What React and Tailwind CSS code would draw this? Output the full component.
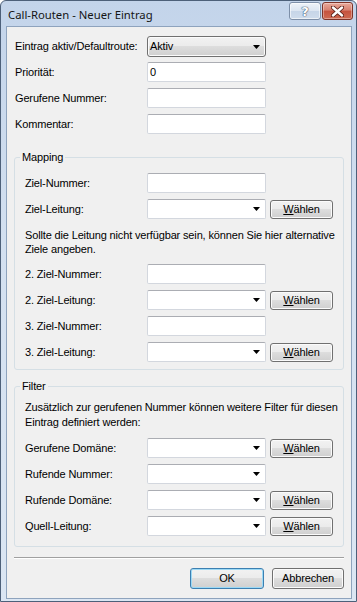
const btnBg =
  'bg-[linear-gradient(to_bottom,#f2f2f2_0%,#ebebeb_50%,#dddddd_50%,#cfcfcf_100%)]';

const Arrow = () => (
  <svg width="7" height="4" viewBox="0 0 7 4" className="shrink-0">
    <polygon points="0,0 7,0 3.5,4" fill="#000" />
  </svg>
);

const TextBox = ({ value }) => (
  <div className="h-[20px] w-[119px] shrink-0 bg-white border border-[#d3d7de] border-t-[#abadb3] rounded-[2px] pl-[2px] flex items-center">
    {value}
  </div>
);

const Combo = () => (
  <div className="h-[20px] w-[119px] shrink-0 bg-white border border-[#d3d7de] border-t-[#abadb3] rounded-[2px] pr-[5px] flex items-center justify-end">
    <Arrow />
  </div>
);

const ChooseButton = () => (
  <div
    className={`ml-[4px] h-[19px] w-[63px] shrink-0 border border-[#707070] rounded-[3px] shadow-[inset_0_0_0_1px_#fbfbfb] ${btnBg} flex items-center justify-center`}
  >
    <span>
      <span className="underline underline-offset-[1px]">W</span>ählen
    </span>
  </div>
);

const Row = ({ label, labelWidth, children }) => (
  <div className="flex items-center h-[20px]">
    <span className={`${labelWidth} shrink-0 whitespace-nowrap`}>{label}</span>
    {children}
  </div>
);

const Group = ({ title, className, children }) => (
  <fieldset
    className={`ml-[7px] w-[330px] border border-[#d5dfe5] rounded-[3px] pl-[10px] ${className}`}
  >
    <legend className="ml-[-5px] px-[2px] leading-[13px]">{title}</legend>
    {children}
  </fieldset>
);

export default function App() {
  const gl = 'w-[122px]';
  return (
    <div className="w-[357px] h-[602px] overflow-hidden font-['Liberation_Sans',Arial,sans-serif] text-[11px] tracking-[-0.15px] text-black">
      <div className="w-full h-full flex flex-col rounded-t-[6px] border border-[#4d6079] bg-[linear-gradient(to_bottom,#c3d4ea_0%,#d3e0f0_40%,#dbe6f3_100%)]">
        {/* title bar */}
        <div className="h-[25px] shrink-0 flex items-start pl-[7px]">
          <span className="pt-[6px] text-[11.3px] leading-[15px] tracking-normal text-[#151515] font-['Noto_Sans',sans-serif]">
            Call-Routen - Neuer Eintrag
          </span>
          <div className="ml-auto mt-[1px] mr-[3px] flex gap-[1px]">
            <div className="w-[32px] h-[18px] rounded-[3px] border border-[#7d8fa8] bg-[linear-gradient(to_bottom,#eef3f9_0%,#dbe5f1_50%,#c6d5e8_50%,#cfdcec_100%)] shadow-[inset_0_0_0_1px_rgba(255,255,255,0.6)] flex items-center justify-center">
              <span className="font-bold text-[13px] leading-none text-white font-['DejaVu_Sans',sans-serif] [text-shadow:0_0_1px_#3f5470,0_0_1px_#3f5470,0_0_1px_#3f5470]">
                ?
              </span>
            </div>
            <div className="w-[31px] h-[18px] rounded-[3px] border border-[#7e3328] bg-[linear-gradient(to_bottom,#e9a99b_0%,#d7806f_45%,#c5523e_50%,#cf6a52_100%)] shadow-[inset_0_0_0_1px_rgba(255,255,255,0.35)] flex items-center justify-center">
              <svg width="13" height="11" viewBox="0 0 13 11">
                <path d="M2 1.5 L11 9.5 M11 1.5 L2 9.5" stroke="#5a2018" strokeWidth="4.2" strokeLinecap="round" />
                <path d="M2 1.5 L11 9.5 M11 1.5 L2 9.5" stroke="#fff" strokeWidth="2.4" strokeLinecap="round" />
              </svg>
            </div>
          </div>
        </div>

        {/* client area */}
        <div className="flex-1 ml-[5px] mr-[4px] mb-[2px] bg-[#f0f0f0] border border-[#8ea3bd] flex flex-col pt-[9px] overflow-hidden">
          <div className="pl-[8px] flex flex-col">
            <div className="flex items-center h-[21px]">
              <span className="w-[132px] shrink-0 whitespace-nowrap">Eintrag aktiv/Defaultroute:</span>
              <div className={`h-[21px] w-[119px] border border-[#707070] rounded-[3px] ${btnBg} shadow-[inset_0_0_0_1px_#fbfbfb] pl-[2px] pr-[5px] flex items-center justify-between`}>
                <span>Aktiv</span>
                <Arrow />
              </div>
            </div>
            <div className="mt-[5px] flex flex-col gap-[6px]">
              <Row label="Priorität:" labelWidth="w-[132px]">
                <TextBox value="0" />
              </Row>
              <Row label="Gerufene Nummer:" labelWidth="w-[132px]">
                <TextBox />
              </Row>
              <Row label="Kommentar:" labelWidth="w-[132px]">
                <TextBox />
              </Row>
            </div>
          </div>

          <Group title="Mapping" className="mt-[17px] pt-[9px] pb-[7px]">
            <div className="flex flex-col gap-[6px]">
              <Row label="Ziel-Nummer:" labelWidth={gl}>
                <TextBox />
              </Row>
              <Row label="Ziel-Leitung:" labelWidth={gl}>
                <Combo />
                <ChooseButton />
              </Row>
            </div>
            <p className="mt-[9px] leading-[14px] whitespace-nowrap">
              Sollte die Leitung nicht verfügbar sein, können Sie hier alternative
              <br />
              Ziele angeben.
            </p>
            <div className="mt-[8px] flex flex-col gap-[6px]">
              <Row label="2. Ziel-Nummer:" labelWidth={gl}>
                <TextBox />
              </Row>
              <Row label="2. Ziel-Leitung:" labelWidth={gl}>
                <Combo />
                <ChooseButton />
              </Row>
              <Row label="3. Ziel-Nummer:" labelWidth={gl}>
                <TextBox />
              </Row>
              <Row label="3. Ziel-Leitung:" labelWidth={gl}>
                <Combo />
                <ChooseButton />
              </Row>
            </div>
          </Group>

          <Group title="Filter" className="mt-[10px] pt-[7px] pb-[10px]">
            <p className="leading-[15px] whitespace-nowrap">
              Zusätzlich zur gerufenen Nummer können weitere Filter für diesen
              <br />
              Eintrag definiert werden:
            </p>
            <div className="mt-[8px] flex flex-col gap-[6px]">
              <Row label="Gerufene Domäne:" labelWidth={gl}>
                <Combo />
                <ChooseButton />
              </Row>
              <Row label="Rufende Nummer:" labelWidth={gl}>
                <Combo />
              </Row>
              <Row label="Rufende Domäne:" labelWidth={gl}>
                <Combo />
                <ChooseButton />
              </Row>
              <Row label="Quell-Leitung:" labelWidth={gl}>
                <Combo />
                <ChooseButton />
              </Row>
            </div>
          </Group>

          <div className="mt-[10px] ml-[7px] w-[330px] h-[2px] shrink-0 border-t border-[#a0a0a0] border-b border-b-white" />

          <div className="mt-[9px] flex justify-end gap-[8px] pr-[7px]">
            <div className={`h-[21px] w-[74px] border border-[#3c7fb1] rounded-[3px] ${btnBg} shadow-[inset_0_0_0_1px_#9cd9f5] flex items-center justify-center`}>
              OK
            </div>
            <div className={`h-[21px] w-[72px] border border-[#707070] rounded-[3px] ${btnBg} shadow-[inset_0_0_0_1px_#fbfbfb] flex items-center justify-center`}>
              Abbrechen
            </div>
          </div>
        </div>
      </div>
    </div>
  );
}
